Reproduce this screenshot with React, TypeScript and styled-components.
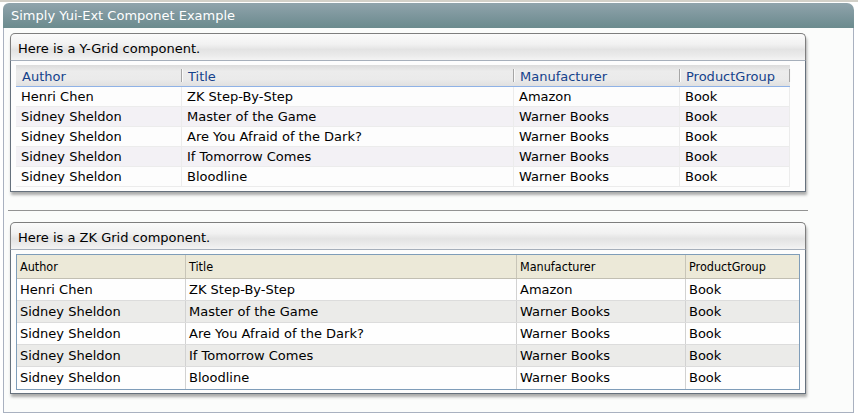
import React from 'react';
import styled, { createGlobalStyle } from 'styled-components';

const Global = createGlobalStyle`
  html, body { margin: 0; padding: 0; background: #ffffff; }
  body {
    font-family: "DejaVu Sans", Verdana, sans-serif;
    font-size: 13px;
    color: #000;
  }
  * { box-sizing: border-box; }
`;

const Page = styled.div`
  width: 858px;
  border-top: 2px solid #d2d0c8;
  padding: 1px 4px 0 3px;
`;

const Window = styled.div`
  width: 851px;
`;

const WindowHeader = styled.div`
  height: 25px;
  line-height: 25px;
  padding-left: 8px;
  color: #ffffff;
  font-size: 13px;
  border-radius: 6px 7px 0 0;
  background: linear-gradient(#90a4ac, #7b959b 55%, #6b8b8e);
`;

const WindowBody = styled.div`
  border: 1px solid #a9b1c0;
  border-top: none;
  background: #fbfcfb;
  padding: 5px 0 18px 6px;
`;

const Panel = styled.div<{ $top?: number }>`
  width: 796px;
  margin-top: ${(p) => p.$top ?? 0}px;
  box-shadow: 1px 3px 3px rgba(0, 0, 0, 0.32);
  border-radius: 5px 5px 0 0;
`;

const PanelHeader = styled.div`
  height: 27px;
  padding: 4px 0 0 7px;
  line-height: 22px;
  border: 1px solid #7e7e7e;
  border-bottom: none;
  border-radius: 5px 5px 0 0;
  background: linear-gradient(#fbfbfb 0%, #f1f1f1 40%, #e3e3e3 60%, #ececec 85%, #f4f4f4 100%);
`;

const PanelBody = styled.div<{ $bottom: number }>`
  border: 1px solid #66717d;
  border-top: 1px solid #a6afbb;
  background: #fdfdfd;
  padding: 4px 5px ${(p) => p.$bottom}px 5px;
`;

const Rule = styled.div`
  width: 800px;
  height: 1px;
  margin: 18px 0 0 -2px;
  background: #939393;
`;

/* ---------- Y-Grid (yui-ext) ---------- */

const yCols = '166px 332px 166px 110px';

const YGrid = styled.div`
  width: 774px;
`;

const YHeadRow = styled.div`
  display: grid;
  grid-template-columns: ${yCols};
  height: 22px;
  border-bottom: 1px solid #8fb2e6;
  background: linear-gradient(#dcdcdc 0%, #ececec 30%, #eaeaea 70%, #e0e0e0 100%);
`;

const YHeadCell = styled.div`
  position: relative;
  padding: 3px 0 0 6px;
  line-height: 18px;
  color: #15428b;
  &::after {
    content: '';
    position: absolute;
    right: 0;
    top: 4px;
    bottom: 4px;
    width: 1px;
    background: #a6a6a6;
    box-shadow: 1px 0 0 #fafafa;
  }
`;

const YRow = styled.div<{ $alt: boolean }>`
  display: grid;
  grid-template-columns: ${yCols};
  height: 20px;
  border-bottom: 1px solid #ececec;
  background: ${(p) => (p.$alt ? '#f3f1f5' : '#fdfdfd')};
`;

const YCell = styled.div`
  padding-left: 5px;
  line-height: 19px;
  border-right: 1px solid #ececec;
  white-space: nowrap;
`;

/* ---------- ZK Grid ---------- */

const zCols = '169px 331px 169px 113px';

const ZGrid = styled.div`
  width: 784px;
  border: 1px solid #7f9db9;
`;

const ZHeadRow = styled.div`
  display: grid;
  grid-template-columns: ${zCols};
  height: 24px;
  background: #ece9d8;
  border-bottom: 1px solid #c2bfb2;
`;

const ZHeadCell = styled.div`
  font-family: "DejaVu Sans Condensed", "DejaVu Sans", sans-serif;
  font-size: 12.5px;
  line-height: 23px;
  padding-left: 3px;
  border-right: 1px solid #c8c5b8;
  &:last-child { border-right: none; }
`;

const ZRow = styled.div<{ $alt: boolean }>`
  display: grid;
  grid-template-columns: ${zCols};
  height: 22px;
  border-bottom: 1px solid #dcdcdc;
  background: ${(p) => (p.$alt ? '#ebebe9' : '#fefefe')};
  &:last-child { border-bottom: none; }
`;

const ZCell = styled.div`
  line-height: 21px;
  padding-left: 3px;
  border-right: 1px solid #d2d2d2;
  white-space: nowrap;
  &:last-child { border-right: none; }
`;

const columns = ['Author', 'Title', 'Manufacturer', 'ProductGroup'];

const rows = [
  ['Henri Chen', 'ZK Step-By-Step', 'Amazon', 'Book'],
  ['Sidney Sheldon', 'Master of the Game', 'Warner Books', 'Book'],
  ['Sidney Sheldon', 'Are You Afraid of the Dark?', 'Warner Books', 'Book'],
  ['Sidney Sheldon', 'If Tomorrow Comes', 'Warner Books', 'Book'],
  ['Sidney Sheldon', 'Bloodline', 'Warner Books', 'Book'],
];

export default function App() {
  return (
    <Page>
      <Global />
      <Window>
        <WindowHeader>Simply Yui-Ext Componet Example</WindowHeader>
        <WindowBody>
          <Panel>
            <PanelHeader>Here is a Y-Grid component.</PanelHeader>
            <PanelBody $bottom={4}>
              <YGrid>
                <YHeadRow>
                  {columns.map((c) => (
                    <YHeadCell key={c}>{c}</YHeadCell>
                  ))}
                </YHeadRow>
                {rows.map((r, i) => (
                  <YRow key={i} $alt={i % 2 === 1}>
                    {r.map((v, j) => (
                      <YCell key={j}>{v}</YCell>
                    ))}
                  </YRow>
                ))}
              </YGrid>
            </PanelBody>
          </Panel>
          <Rule />
          <Panel $top={11}>
            <PanelHeader>Here is a ZK Grid component.</PanelHeader>
            <PanelBody $bottom={3}>
              <ZGrid>
                <ZHeadRow>
                  {columns.map((c) => (
                    <ZHeadCell key={c}>{c}</ZHeadCell>
                  ))}
                </ZHeadRow>
                {rows.map((r, i) => (
                  <ZRow key={i} $alt={i % 2 === 1}>
                    {r.map((v, j) => (
                      <ZCell key={j}>{v}</ZCell>
                    ))}
                  </ZRow>
                ))}
              </ZGrid>
            </PanelBody>
          </Panel>
        </WindowBody>
      </Window>
    </Page>
  );
}
